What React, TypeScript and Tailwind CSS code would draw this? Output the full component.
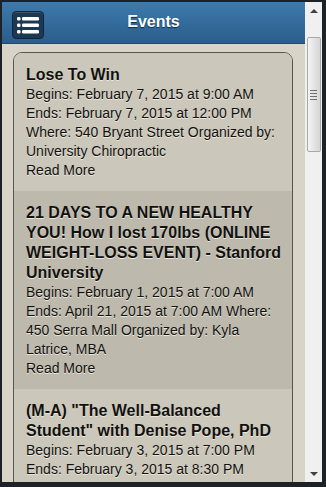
import React from 'react';

type EventItem = {
  title: string;
  details: string;
  shade: 'light' | 'dark';
};

const EVENTS: EventItem[] = [
  {
    title: 'Lose To Win',
    details:
      'Begins: February 7, 2015 at 9:00 AM Ends: February 7, 2015 at 12:00 PM Where: 540 Bryant Street Organized by: University Chiropractic',
    shade: 'light',
  },
  {
    title: '21 DAYS TO A NEW HEALTHY YOU! How I lost 170lbs (ONLINE WEIGHT-LOSS EVENT) - Stanford University',
    details:
      'Begins: February 1, 2015 at 7:00 AM Ends: April 21, 2015 at 7:00 AM Where: 450 Serra Mall Organized by: Kyla Latrice, MBA',
    shade: 'dark',
  },
  {
    title: '(M-A) "The Well-Balanced Student" with Denise Pope, PhD',
    details:
      'Begins: February 3, 2015 at 7:00 PM Ends: February 3, 2015 at 8:30 PM',
    shade: 'light',
  },
];

function MenuIcon() {
  return (
    <svg width="22" height="18" viewBox="0 0 22 18" fill="#ffffff">
      <rect x="0" y="1" width="3.5" height="3.5" rx="1.2" />
      <rect x="5" y="1" width="17" height="3.5" rx="1.2" />
      <rect x="0" y="7.5" width="3.5" height="3.5" rx="1.2" />
      <rect x="5" y="7.5" width="17" height="3.5" rx="1.2" />
      <rect x="0" y="14" width="3.5" height="3.5" rx="1.2" />
      <rect x="5" y="14" width="17" height="3.5" rx="1.2" />
    </svg>
  );
}

function Scrollbar() {
  return (
    <div className="flex w-[17px] flex-col items-center bg-[#f0f0f0]">
      <div className="flex h-[17px] w-full items-center justify-center">
        <div className="h-0 w-0 border-x-[4px] border-b-[4px] border-x-transparent border-b-[#404040]" />
      </div>
      <div className="mt-[18px] flex h-[115px] w-[14px] items-center justify-center rounded-[2px] border border-[#a8a8a8] bg-gradient-to-r from-[#f4f4f4] via-[#e4e4e4] to-[#d6d6d6]">
        <div className="flex flex-col gap-[2px]">
          <div className="h-px w-[7px] bg-[#707070]" />
          <div className="h-px w-[7px] bg-[#707070]" />
          <div className="h-px w-[7px] bg-[#707070]" />
          <div className="h-px w-[7px] bg-[#707070]" />
        </div>
      </div>
      <div className="flex-1" />
      <div className="flex h-[17px] w-full items-center justify-center">
        <div className="h-0 w-0 border-x-[4px] border-t-[4px] border-x-transparent border-t-[#404040]" />
      </div>
    </div>
  );
}

export default function App() {
  return (
    <div className="h-[487px] w-[326px] overflow-hidden bg-[#1d2226] pl-[2px] pt-[2px] font-['Liberation_Sans',Arial,sans-serif]">
      <div className="flex h-[480px] w-[320px] overflow-hidden">
        <div className="flex-1 overflow-hidden bg-[#d8d4c7]">
          {/* Header */}
          <div className="relative flex h-[42px] items-center justify-center border-b border-[#24496b] bg-gradient-to-b from-[#3c7bae] to-[#2b5d8b]">
            <button className="absolute left-[10px] top-[9px] flex h-[28px] w-[32px] items-center justify-center rounded-[4px] border border-[#12263b] bg-[#1d3852] shadow-[inset_0_1px_0_rgba(255,255,255,0.15)]">
              <MenuIcon />
            </button>
            <h1 className="-mt-[2px] text-[16px] font-bold leading-[20px] text-white [text-shadow:0_1px_1px_#0f2a44]">
              Events
            </h1>
          </div>

          {/* Event list */}
          <div className="pl-[11px] pr-[12px] pt-[8px]">
            <div className="overflow-hidden rounded-t-[9px] border border-[#57564e]">
              {EVENTS.map((ev) => (
                <div
                  key={ev.title}
                  className={`pl-[12px] pr-[6px] pt-[12px] pb-[11px] text-[#111111] [text-shadow:0_1px_0_#ebe7da] ${
                    ev.shade === 'light' ? 'bg-[#cbc7ba]' : 'bg-[#bdb9ad]'
                  }`}
                >
                  <h2 className="text-[16px] font-bold leading-[20px]">{ev.title}</h2>
                  <p className="text-[14px] leading-[19px]">{ev.details}</p>
                  <a className="block text-[14px] leading-[19px]">Read More</a>
                </div>
              ))}
            </div>
          </div>
        </div>
        <Scrollbar />
      </div>
    </div>
  );
}
